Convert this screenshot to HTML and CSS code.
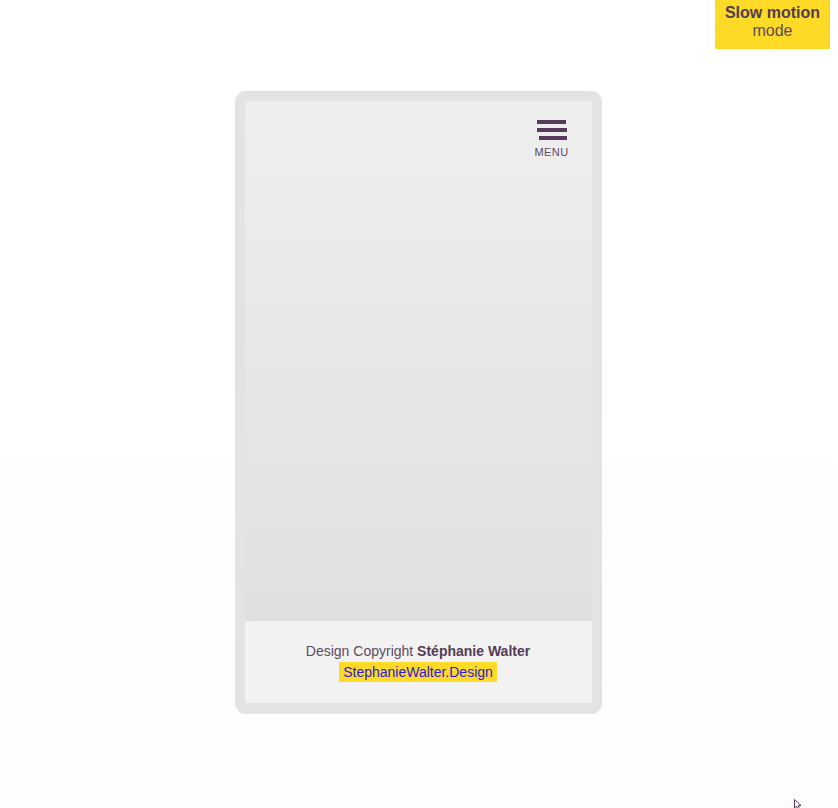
FILE: index.html
```html
<!DOCTYPE html>
<html lang="en">
<head>
<meta charset="utf-8">
<title>Slow motion menu</title>
<link rel="stylesheet" href="styles.css">
</head>
<body>
<div class="topbar">
  <button class="slowmo"><strong>Slow motion</strong><span>mode</span></button>
</div>
<main class="phone">
  <div class="screen">
    <div class="menu">
      <span class="bars">
        <i class="bar b1"></i>
        <i class="bar b2"></i>
        <i class="bar b3"></i>
      </span>
      <span class="menu-label">MENU</span>
    </div>
  </div>
  <footer class="credits">
    <p>Design Copyright <strong>Stéphanie Walter</strong></p>
    <p><a href="#">StephanieWalter.Design</a></p>
  </footer>
</main>
<svg class="cursor" width="10" height="12" viewBox="0 0 10 12"><path d="M0.5 0.5 L0.5 9 L2.5 7 L4 10.5 L5.5 9.8 L4.2 6.5 L7 6.5 Z" fill="#fff" stroke="#5a3a5c" stroke-width="1"/></svg>
</body>
</html>
```

FILE: styles.css
```css
html, body {
  margin: 0;
  padding: 0;
}
body {
  background: linear-gradient(#ffffff 40%, #fdfdfd);
  font-family: "Liberation Sans", Arial, sans-serif;
  width: 838px;
  height: 808px;
  position: relative;
  overflow: hidden;
}
.topbar {
  display: flex;
  justify-content: flex-end;
  padding-right: 8px;
}
.slowmo {
  width: 115px;
  height: 49px;
  border: 0;
  margin: 0;
  padding: 4px 0 0;
  background: #fdda25;
  display: flex;
  flex-direction: column;
  align-items: center;
  justify-content: flex-start;
  font-family: "Liberation Sans", Arial, sans-serif;
  font-size: 16px;
  line-height: 18px;
  color: #5d4c5e;
}
.slowmo strong {
  color: #533b55;
  font-weight: bold;
}
.phone {
  width: 347px;
  margin: 42px auto 0;
  padding: 10px;
  background: #e3e3e3;
  border-radius: 11px;
  position: relative;
  left: -1px;
  padding-bottom: 11px;
}
.screen {
  height: 520px;
  background: linear-gradient(#eeeeee, #e0e0e0);
  display: flex;
  justify-content: flex-end;
  align-items: flex-start;
}
.menu {
  margin: 19px 23px 0 0;
  display: flex;
  flex-direction: column;
  align-items: center;
  gap: 6px;
}
.bars {
  display: flex;
  flex-direction: column;
  gap: 4px;
  width: 32px;
  align-items: flex-start;
}
.bar {
  display: block;
  height: 4px;
  background: #573a5b;
}
.b1 { width: 29px; margin-left: 1px; }
.b2 { width: 30px; margin-left: 1px; }
.b3 { width: 28px; margin-left: 3px; }
.menu-label {
  font-size: 11px;
  line-height: 12px;
  letter-spacing: 0.4px;
  color: #5f4b62;
}
.credits {
  height: 82px;
  background: #f2f2f2;
  padding-top: 20px;
  box-sizing: border-box;
  text-align: center;
  font-size: 14px;
  color: #5d4c5e;
}
.credits p {
  margin: 0;
  line-height: 21px;
}
.credits strong {
  color: #533b55;
}
.credits a {
  background: #fdda25;
  color: #2c18d6;
  text-decoration: none;
  padding: 2px 4px 2px;
}
.cursor {
  position: absolute;
  left: 794px;
  top: 799px;
}
```
